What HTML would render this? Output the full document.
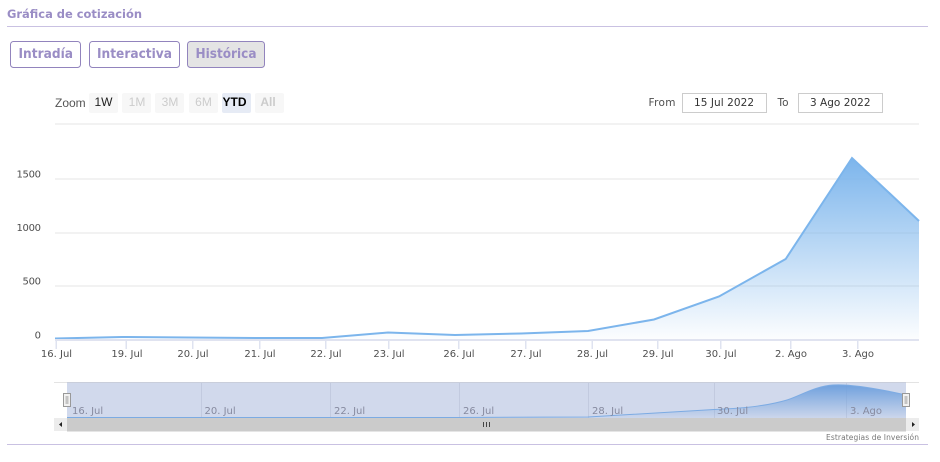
<!DOCTYPE html>
<html><head><meta charset="utf-8">
<style>
html,body{margin:0;padding:0;background:#fff;width:940px;height:462px;overflow:hidden}
svg{position:absolute;left:0;top:0;display:block}
.t{font-family:"DejaVu Sans",sans-serif;font-weight:bold;fill:#9a8dc5}
.d{font-family:"DejaVu Sans",sans-serif;font-size:10px;fill:#4f4f4f}
.n{font-family:"DejaVu Sans",sans-serif;font-size:10px;fill:#868a9f}
.z{font-family:"Liberation Sans",sans-serif;font-size:12px;text-anchor:middle;fill:#ccc}
</style></head>
<body>
<svg width="940" height="462" viewBox="0 0 940 462" xmlns="http://www.w3.org/2000/svg">
<defs>
<linearGradient id="g" x1="0" y1="158" x2="0" y2="340" gradientUnits="userSpaceOnUse"><stop offset="0" stop-color="#7cb5ec"/><stop offset="1" stop-color="#7cb5ec" stop-opacity="0.02"/></linearGradient>
<linearGradient id="g2" x1="0" y1="384" x2="0" y2="418" gradientUnits="userSpaceOnUse"><stop offset="0" stop-color="#6d9fdd"/><stop offset="1" stop-color="#6d9fdd" stop-opacity="0.05"/></linearGradient>
</defs>
<text x="7" y="18" class="t" font-size="11.5" textLength="135" lengthAdjust="spacingAndGlyphs">Gráfica de cotización</text>
<rect x="7" y="26" width="921" height="1" fill="#c9c1e2"/>
<rect x="10.5" y="41.5" width="70" height="26" rx="3" fill="#fff" stroke="#9284bd"/>
<rect x="89.5" y="41.5" width="90" height="26" rx="3" fill="#fff" stroke="#9284bd"/>
<rect x="187.5" y="41.5" width="77" height="26" rx="3" fill="#e4e4e4" stroke="#9284bd"/>
<text x="18.5" y="58" class="t" font-size="13.5" textLength="54.5" lengthAdjust="spacingAndGlyphs">Intradía</text>
<text x="97" y="58" class="t" font-size="13.5" textLength="75" lengthAdjust="spacingAndGlyphs">Interactiva</text>
<text x="195.5" y="58" class="t" font-size="13.5" textLength="61" lengthAdjust="spacingAndGlyphs">Histórica</text>
<text x="55" y="107" font-family="Liberation Sans,sans-serif" font-size="12" fill="#555">Zoom</text>
<g fill="#f7f7f7">
<rect x="89" y="93" width="29" height="20" rx="2"/><rect x="122" y="93" width="29" height="20" rx="2"/><rect x="155" y="93" width="29" height="20" rx="2"/><rect x="189" y="93" width="29" height="20" rx="2"/><rect x="255" y="93" width="29" height="20" rx="2"/>
</g>
<rect x="222" y="93" width="29" height="20" rx="2" fill="#e6ebf5"/>
<text x="103.5" y="106" class="z" style="fill:#222">1W</text>
<text x="137" y="106" class="z">1M</text>
<text x="170" y="106" class="z">3M</text>
<text x="203.5" y="106" class="z">6M</text>
<text x="234.5" y="106" class="z" style="fill:#000;font-weight:bold">YTD</text>
<text x="268" y="106" class="z" style="font-weight:bold">All</text>
<text x="648.5" y="106" class="d" style="font-size:10.5px" textLength="27">From</text>
<text x="777.5" y="106" class="d" style="font-size:10.5px">To</text>
<rect x="682.5" y="93.5" width="84" height="19" fill="#fff" stroke="#ccc"/>
<rect x="798.5" y="93.5" width="84" height="19" fill="#fff" stroke="#ccc"/>
<text x="694" y="106" class="d" style="font-size:10.5px;fill:#333" textLength="60">15 Jul 2022</text>
<text x="810" y="106" class="d" style="font-size:10.5px;fill:#333" textLength="60.5">3 Ago 2022</text>
<g fill="#f2f2f2">
<rect x="55" y="123" width="864" height="2"/><rect x="55" y="178" width="864" height="2"/><rect x="55" y="232" width="864" height="2"/><rect x="55" y="285" width="864" height="2"/>
</g>
<text x="41" y="177.5" class="d" text-anchor="end" textLength="24.5">1500</text>
<text x="41" y="231" class="d" text-anchor="end" textLength="24.5">1000</text>
<text x="41" y="284.5" class="d" text-anchor="end" textLength="18.5">500</text>
<text x="41" y="338.5" class="d" text-anchor="end">0</text>
<path d="M55 338.5L122 337L189 337.5L255 338L322 338L388 332.5L455 335L521 333.5L588 331L654 319.5L719 296.5L785.7 259L852 158L919 221V340H55Z" fill="url(#g)"/>
<path d="M55 338.5L122 337L189 337.5L255 338L322 338L388 332.5L455 335L521 333.5L588 331L654 319.5L719 296.5L785.7 259L852 158L919 221" fill="none" stroke="#7cb5ec" stroke-width="2"/>
<rect x="55" y="339" width="864" height="2" fill="#e0e3f0"/>
<g fill="#dfe3f0">
<rect x="55.5" y="340" width="1.5" height="9"/><rect x="125.5" y="340" width="1.5" height="9"/><rect x="192" y="340" width="1.5" height="9"/><rect x="259" y="340" width="1.5" height="9"/><rect x="325" y="340" width="1.5" height="9"/><rect x="388" y="340" width="1.5" height="9"/><rect x="458" y="340" width="1.5" height="9"/><rect x="525" y="340" width="1.5" height="9"/><rect x="591.5" y="340" width="1.5" height="9"/><rect x="657" y="340" width="1.5" height="9"/><rect x="720" y="340" width="1.5" height="9"/><rect x="790" y="340" width="1.5" height="9"/><rect x="857" y="340" width="1.5" height="9"/>
</g>
<g class="d" text-anchor="middle">
<text x="56.5" y="357">16. Jul</text><text x="127" y="357">19. Jul</text><text x="193" y="357">20. Jul</text><text x="260" y="357">21. Jul</text><text x="326" y="357">22. Jul</text><text x="389" y="357">23. Jul</text><text x="459" y="357">26. Jul</text><text x="526" y="357">27. Jul</text><text x="592.5" y="357">28. Jul</text><text x="658" y="357">29. Jul</text><text x="721" y="357">30. Jul</text><text x="791" y="357">2. Ago</text><text x="858" y="357">3. Ago</text>
</g>
<rect x="54" y="382" width="865" height="1" fill="#e3e3e3"/>
<rect x="67" y="382" width="839" height="36" fill="#d1d9ec"/>
<rect x="67" y="382" width="839" height="1" fill="#c9cedb"/>
<g fill="#c2cadf">
<rect x="201" y="383" width="1" height="35"/><rect x="330" y="383" width="1" height="35"/><rect x="459" y="383" width="1" height="35"/><rect x="588" y="383" width="1" height="35"/><rect x="714" y="383" width="1" height="35"/><rect x="846" y="383" width="1" height="35"/>
</g>
<path d="M67 417.5L459 417.5L588 417C640 414 690 411 714 409.5C750 408 770 405 787 400C800 396 815 386 833 385C850 384 875 388 906 395V418H67Z" fill="url(#g2)"/>
<path d="M67 417.5L459 417.5L588 417C640 414 690 411 714 409.5C750 408 770 405 787 400C800 396 815 386 833 385C850 384 875 388 906 395" fill="none" stroke="#7cabe3" stroke-width="1"/>
<g class="n">
<text x="72" y="414">16. Jul</text><text x="204.5" y="414">20. Jul</text><text x="334" y="414">22. Jul</text><text x="463" y="414">26. Jul</text><text x="592" y="414">28. Jul</text><text x="717" y="414">30. Jul</text><text x="850" y="414">3. Ago</text>
</g>
<rect x="54" y="418" width="865" height="13" fill="#ececec"/>
<rect x="67" y="418" width="839" height="13.5" fill="#cbcbcb"/>
<path d="M59 424.5L62 422V427Z" fill="#222"/>
<path d="M912 422L915 424.5L912 427Z" fill="#222"/>
<rect x="483" y="422" width="1" height="5" fill="#444"/><rect x="486" y="422" width="1" height="5" fill="#444"/><rect x="489" y="422" width="1" height="5" fill="#444"/>
<rect x="63.5" y="393.5" width="7" height="13" fill="#f2f2f2" stroke="#999"/>
<rect x="65.5" y="396" width="3" height="8" fill="#c4c4c4"/>
<rect x="902.5" y="393.5" width="7" height="13" fill="#f2f2f2" stroke="#999"/>
<rect x="904.5" y="396" width="3" height="8" fill="#c4c4c4"/>
<text x="826" y="440" font-family="DejaVu Sans,sans-serif" font-size="7.5" fill="#777" textLength="93">Estrategias de Inversión</text>
<rect x="7" y="444" width="921" height="1" fill="#c9c1e2"/>
</svg>
</body></html>
